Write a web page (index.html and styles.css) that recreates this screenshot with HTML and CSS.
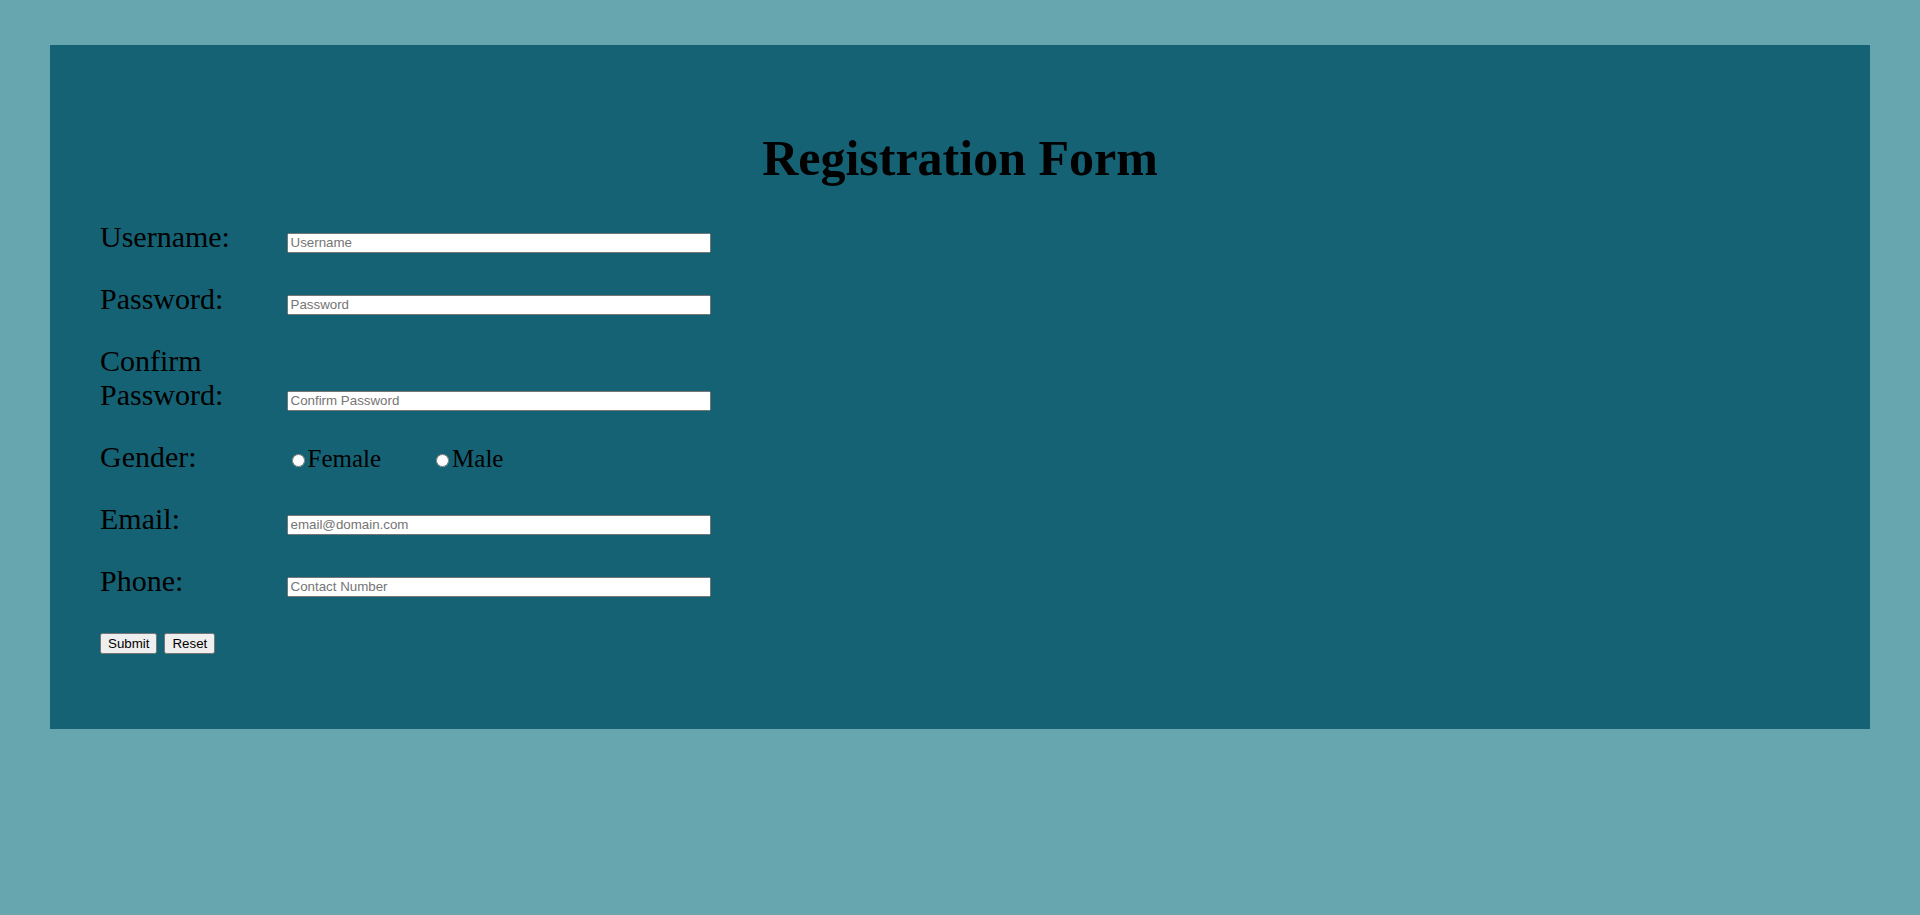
FILE: index.html
```html
<!DOCTYPE html>
<html>
<head>
<meta charset="utf-8">
<title>Registration Form</title>
<link rel="stylesheet" href="styles.css">
</head>
<body>
<div class="panel">
  <h1 class="title">Registration Form</h1>
  <form class="form">
    <div class="row"><label class="label" for="u">Username:</label><input class="field" id="u" type="text" placeholder="Username"></div>
    <div class="row"><label class="label" for="p">Password:</label><input class="field" id="p" type="password" placeholder="Password"></div>
    <div class="row"><label class="label" for="c">Confirm Password:</label><input class="field" id="c" type="password" placeholder="Confirm Password"></div>
    <div class="row"><span class="label">Gender:</span><input class="radio" type="radio" name="g" id="f"><label class="option option-first" for="f">Female</label><input class="radio" type="radio" name="g" id="m"><label class="option" for="m">Male</label></div>
    <div class="row"><label class="label" for="e">Email:</label><input class="field" id="e" type="email" placeholder="email@domain.com"></div>
    <div class="row"><label class="label" for="t">Phone:</label><input class="field" id="t" type="text" placeholder="Contact Number"></div>
    <div class="actions"><button class="btn" type="submit">Submit</button><button class="btn" type="reset">Reset</button></div>
  </form>
</div>
</body>
</html>
```
FILE: styles.css
```css
html {
  background: #67a5af;
}
body {
  margin: 0;
  background: #67a5af;
  font-family: "Liberation Serif", "Times New Roman", serif;
  color: #000;
}
.panel {
  margin: 45px 50px 0;
  padding: 84px 50px 75px;
  background: #166275;
}
.title {
  margin: 0 0 33px;
  font-size: 50px;
  line-height: 58px;
  font-weight: bold;
  text-align: center;
}
.form {
  margin: 0;
}
.row {
  font-size: 30px;
  line-height: 34px;
  margin-bottom: 28px;
}
.label {
  display: inline-block;
  width: 186.5px;
  vertical-align: baseline;
}
.field {
  box-sizing: border-box;
  width: 424px;
  height: 20px;
  margin: 0;
  vertical-align: baseline;
  font-family: "Liberation Sans", Arial, sans-serif;
  font-size: 13.333px;
}
.radio {
  margin: 3px 3px 0 5px;
  vertical-align: baseline;
}
.option {
  font-size: 25px;
  line-height: 20px;
}
.option-first {
  margin-right: 50px;
}
.actions {
  display: flex;
  gap: 7px;
  padding-top: 7px;
}
.btn {
  margin: 0;
  font-family: "Liberation Sans", Arial, sans-serif;
  font-size: 13.333px;
}
```
